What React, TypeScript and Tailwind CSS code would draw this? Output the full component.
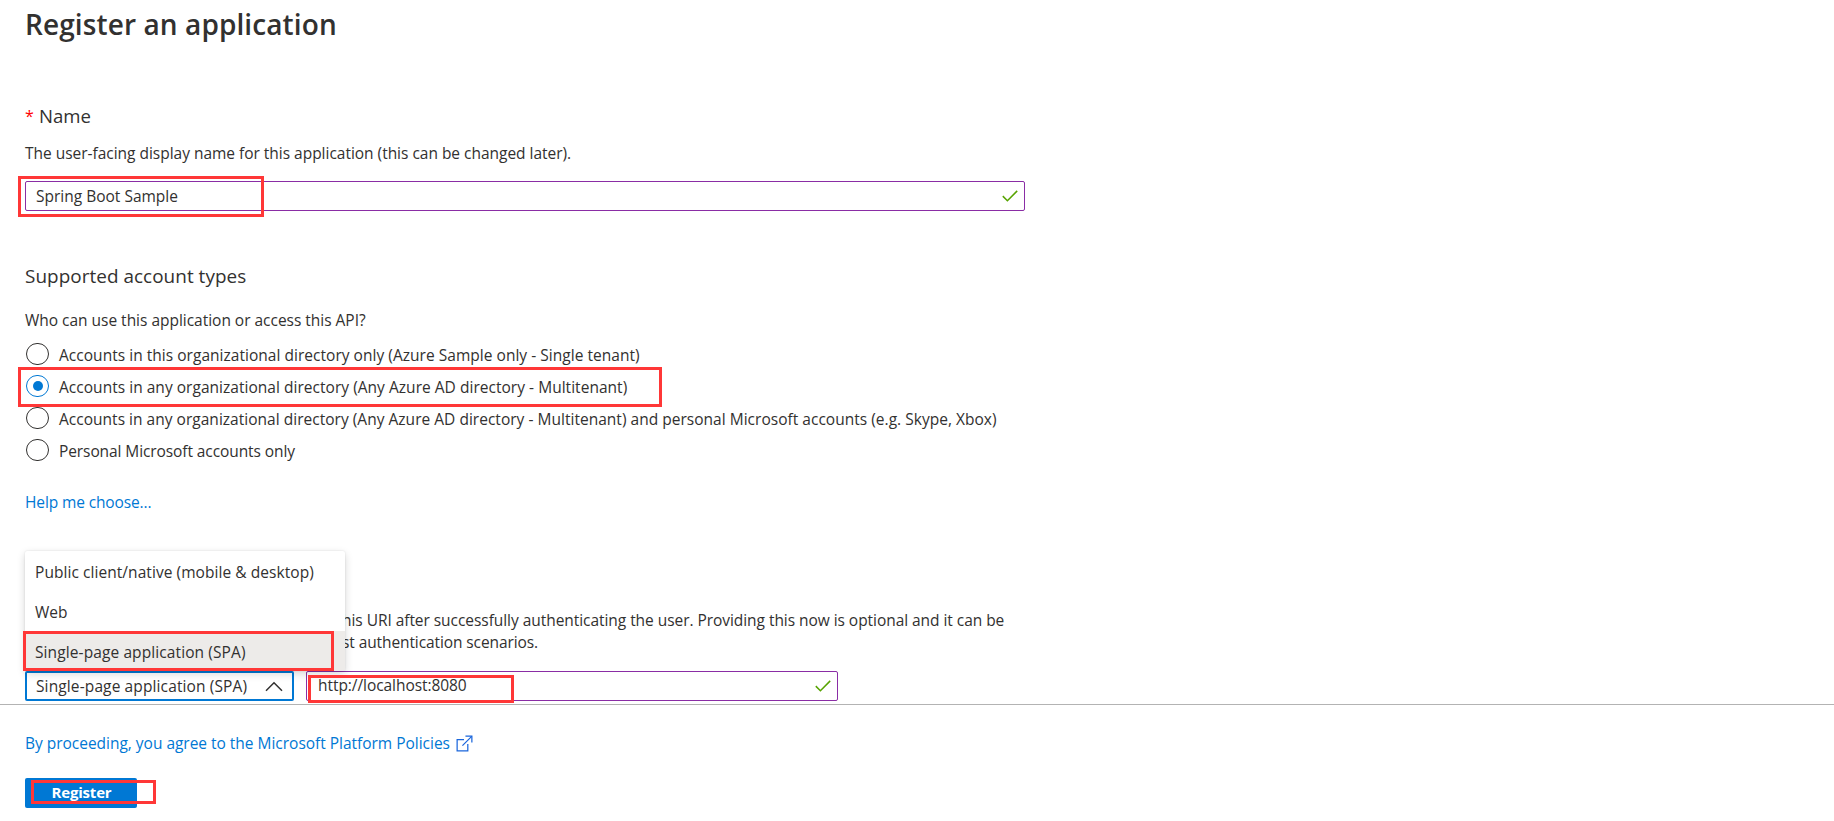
import type { ReactNode } from 'react';

const ACCOUNT_TYPES = [
  {
    label: 'Accounts in this organizational directory only (Azure Sample only - Single tenant)',
    tracking: 'tracking-[0.03px]',
    checked: false,
  },
  {
    label: 'Accounts in any organizational directory (Any Azure AD directory - Multitenant)',
    tracking: 'tracking-[0.03px]',
    checked: true,
  },
  {
    label:
      'Accounts in any organizational directory (Any Azure AD directory - Multitenant) and personal Microsoft accounts (e.g. Skype, Xbox)',
    tracking: 'tracking-[0.02px]',
    checked: false,
  },
  { label: 'Personal Microsoft accounts only', tracking: 'tracking-[-0.09px]', checked: false },
];

/** Red outline laid over a control to call it out. */
function Highlight({ className }: { className: string }) {
  return <span className={`pointer-events-none absolute z-20 border-3 border-[#ff3737] ${className}`} />;
}

function CheckMark() {
  return (
    <svg className="h-[12px] w-[16px]" viewBox="0 0 16 12" fill="none" stroke="#57a300" strokeWidth="1.5">
      <path d="M0.8 6.1 5.4 10.7 15.2 0.9" />
    </svg>
  );
}

function TextBox({ className, children }: { className: string; children: ReactNode }) {
  return (
    <div
      className={`relative flex h-[30px] items-center justify-between rounded-[2px] border border-[#8a2da5] bg-white pl-[10px] pr-[6px] ${className}`}
    >
      {children}
    </div>
  );
}

function Radio({ checked }: { checked: boolean }) {
  return (
    <span
      className={`flex h-[22px] w-[23px] shrink-0 items-center justify-center rounded-full border ${
        checked ? 'border-[#0078d4]' : 'border-[#323130]'
      }`}
    >
      {checked && <span className="size-[10px] rounded-full bg-[#0078d4]" />}
    </span>
  );
}

function PlatformSelect() {
  return (
    <div className="relative h-[30px] w-[269px]">
      <div className="flex h-full items-center justify-between rounded-[2px] border-2 border-[#0078d4] bg-white pl-[9px] pr-[9px]">
        <span className="tracking-[0.12px]">Single-page application (SPA)</span>
        <svg className="h-[11px] w-[18px]" viewBox="0 0 18 11" fill="none" stroke="#323130" strokeWidth="1.5">
          <path d="M1 9.8 9 1.8 17 9.8" />
        </svg>
      </div>
      <div className="absolute bottom-full left-0 z-10 w-[320px] rounded-[2px] bg-white shadow-[0_3px_8px_rgba(0,0,0,0.16),0_0_2px_rgba(0,0,0,0.12)]">
        <div className="flex h-10 items-center pl-[10px] pt-[2px] tracking-[0.06px]">
          Public client/native (mobile &amp; desktop)
        </div>
        <div className="flex h-10 items-center pl-[10px] pt-[2px]">Web</div>
        <div className="relative flex h-10 items-center bg-[#edebe9] pl-[10px] pt-[2px] tracking-[0.1px]">
          Single-page application (SPA)
          <Highlight className="-left-[2px] top-0 h-[40px] w-[311px]" />
        </div>
      </div>
    </div>
  );
}

export default function App() {
  return (
    <div className="h-[821px] w-full overflow-hidden bg-white font-['Open_Sans','Noto_Sans',sans-serif] text-[15.5px] leading-[20px] text-[#323130]">
      <main className="flex h-[704px] flex-col pl-[25px]">
        <h1 className="mt-[4px] h-[40px] text-[28px] font-semibold leading-[40px] tracking-[0.1px]">
          Register an application
        </h1>

        <h2 className="mt-[58px] flex h-[28px] gap-[6px] text-[18.6px] leading-[28px]">
          <span className="w-[8px] text-[16px] text-[#ff0000]">*</span>
          <span>Name</span>
        </h2>
        <p className="mt-[13px] h-[20px] tracking-[-0.02px]">
          The user-facing display name for this application (this can be changed later).
        </p>
        <TextBox className="mt-[18px] w-[1000px]">
          <span>Spring Boot Sample</span>
          <CheckMark />
          <Highlight className="-left-[8px] -top-[6px] h-[41px] w-[246px]" />
        </TextBox>

        <h2 className="mt-[51px] h-[28px] text-[18.9px] leading-[28px] tracking-[0.05px]">Supported account types</h2>
        <p className="mt-[20px] h-[20px] tracking-[-0.02px]">Who can use this application or access this API?</p>
        <div className="mt-[8px] flex flex-col">
          {ACCOUNT_TYPES.map((type) => (
            <label key={type.label} className="relative flex h-8 items-center gap-[10px] pl-px">
              <Radio checked={type.checked} />
              <span className={`whitespace-nowrap pt-[2px] ${type.tracking}`}>{type.label}</span>
              {type.checked && <Highlight className="-left-[7px] -top-[3px] h-[40px] w-[644px]" />}
            </label>
          ))}
        </div>
        <a className="mt-[26px] h-[20px] tracking-[-0.12px] text-[#0078d4]">Help me choose...</a>

        <div className="mt-[97px] flex flex-col whitespace-nowrap pl-[317px] leading-[22px] tracking-[-0.05px]">
          <p>his URI after successfully authenticating the user. Providing this now is optional and it can be</p>
          <p className="tracking-[-0.1px]">st authentication scenarios.</p>
        </div>
        <div className="mt-[18px] flex gap-[12px]">
          <PlatformSelect />
          <TextBox className="w-[532px]">
            <span className="-mt-[2px] pl-px tracking-[-0.06px]">http://localhost:8080</span>
            <CheckMark />
            <Highlight className="left-[1px] top-[3px] h-[28px] w-[206px]" />
          </TextBox>
        </div>
      </main>

      <footer className="border-t border-[#b3b3b3] pl-[25px]">
        <a className="mt-[28px] flex h-[20px] items-center gap-[6px] text-[#0078d4]">
          <span className="tracking-[-0.02px]">By proceeding, you agree to the Microsoft Platform Policies</span>
          <svg className="mt-px size-[17px]" viewBox="0 0 18 18" fill="none" stroke="#1a66dc" strokeWidth="1.3">
            <path d="M8.5 5H1.2v11.8h11.3V9.5" />
            <path d="M10 1.2h6.8V8" />
            <path d="M16.6 1.4 6.8 11.2" />
          </svg>
        </a>
        <div className="relative mt-[25px] flex">
          <button className="h-[30px] w-[112px] rounded-[2px] bg-[#0078d4] pb-[2px] pl-px text-[15px] font-bold tracking-[-0.2px] text-white">
            Register
          </button>
          <Highlight className="left-[6px] top-[2px] h-[24px] w-[125px]" />
        </div>
      </footer>
    </div>
  );
}
